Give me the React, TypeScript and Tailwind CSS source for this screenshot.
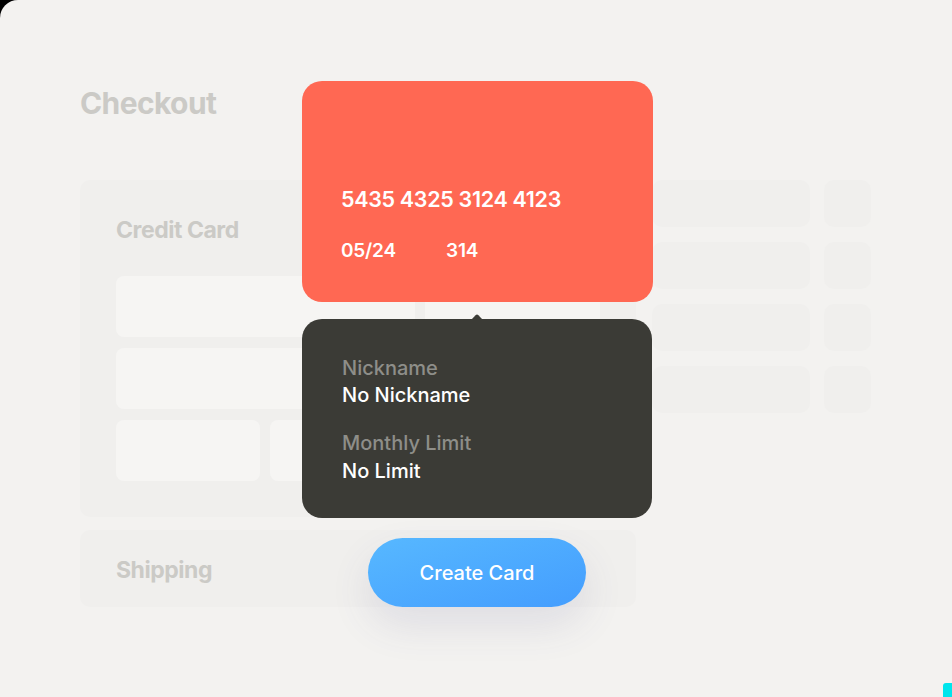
import React from "react";

const font = { fontFamily: "Inter, 'Noto Sans', sans-serif" };

function SideRow() {
  return (
    <div className="flex gap-[14px]">
      <div className="w-[158px] h-[47px] rounded-[10px] bg-[#f0efed]" />
      <div className="w-[47px] h-[47px] rounded-[10px] bg-[#f0efed]" />
    </div>
  );
}

export default function App() {
  return (
    <div className="w-[952px] h-[697px] bg-black overflow-hidden" style={font}>
      <div className="relative w-full h-full bg-[#f3f2f0] rounded-tl-[18px] overflow-hidden">
        {/* background checkout page */}
        <div className="pl-[80px] pt-[88px]">
          <h1 className="text-[30px] leading-none font-bold tracking-[-0.02em] text-[#cbcac6]">Checkout</h1>
          <div className="mt-[62px] flex gap-[16px]">
            <div className="w-[556px] h-[337px] rounded-[10px] bg-[#f0efed] pt-[39px] px-[36px]">
              <div className="text-[23px] leading-none font-bold tracking-[-0.02em] text-[#cbcac6]">Credit Card</div>
              <div className="mt-[34px] flex flex-col gap-[11px]">
                <div className="flex gap-[10px]">
                  <div className="w-[299px] h-[61px] rounded-[8px] bg-[#f6f5f3]" />
                  <div className="flex-1 h-[61px] rounded-[8px] bg-[#f6f5f3]" />
                </div>
                <div className="h-[61px] rounded-[8px] bg-[#f6f5f3]" />
                <div className="flex gap-[10px]">
                  <div className="w-[144px] h-[61px] rounded-[8px] bg-[#f6f5f3]" />
                  <div className="w-[144px] h-[61px] rounded-[8px] bg-[#f6f5f3]" />
                  <div className="flex-1 h-[61px] rounded-[8px] bg-[#f6f5f3]" />
                </div>
              </div>
            </div>
            <div className="flex flex-col gap-[15px]">
              <SideRow />
              <SideRow />
              <SideRow />
              <SideRow />
            </div>
          </div>
          <div className="mt-[13px] w-[556px] h-[77px] rounded-[10px] bg-[#f0efed] px-[36px] pt-[4px] flex items-center">
            <div className="text-[23px] leading-none font-bold tracking-[-0.02em] text-[#cbcac6]">Shipping</div>
          </div>
        </div>

        {/* credit card overlay */}
        <div className="absolute left-[302px] top-[81px] w-[351px] h-[221px] rounded-[20px] bg-[#ff6853] pl-[39px] pt-[108px] text-white">
          <div className="text-[21.5px] leading-none font-semibold tracking-[-0.015em]">5435 4325 3124 4123</div>
          <div className="mt-[30px] flex text-[19px] leading-none font-semibold tracking-[-0.01em]">
            <span className="w-[105px]">05/24</span>
            <span>314</span>
          </div>
        </div>

        {/* info popover */}
        <div className="absolute left-[302px] top-[319px] w-[350px] h-[199px] rounded-[20px] bg-[#3b3b36] pl-[40px] pt-[36px]">
          <svg className="absolute left-[169px] -top-[5px]" width="12" height="6" viewBox="0 0 12 6">
            <path d="M0 6 L4.6 1.2 Q6 0 7.4 1.2 L12 6 Z" fill="#3b3b36" />
          </svg>
          <div className="text-[20px] leading-[27px] font-medium text-[#8e8e89]">Nickname</div>
          <div className="text-[20px] leading-[27px] font-medium text-white">No Nickname</div>
          <div className="mt-[21px] text-[20px] leading-[27px] font-medium text-[#8e8e89]">Monthly Limit</div>
          <div className="text-[20px] leading-[28px] font-medium text-white">No Limit</div>
        </div>

        {/* action button */}
        <button className="absolute left-[368px] top-[538px] w-[218px] h-[69px] rounded-full bg-gradient-to-br from-[#57b8ff] to-[#449dfe] text-white text-[20px] font-medium shadow-[0_18px_40px_rgba(70,70,130,0.12)]">
          Create Card
        </button>

        <div className="absolute right-0 bottom-0 w-[9px] h-[14px] bg-[#00e5ec] rounded-tl-[3px]" />
      </div>
    </div>
  );
}
